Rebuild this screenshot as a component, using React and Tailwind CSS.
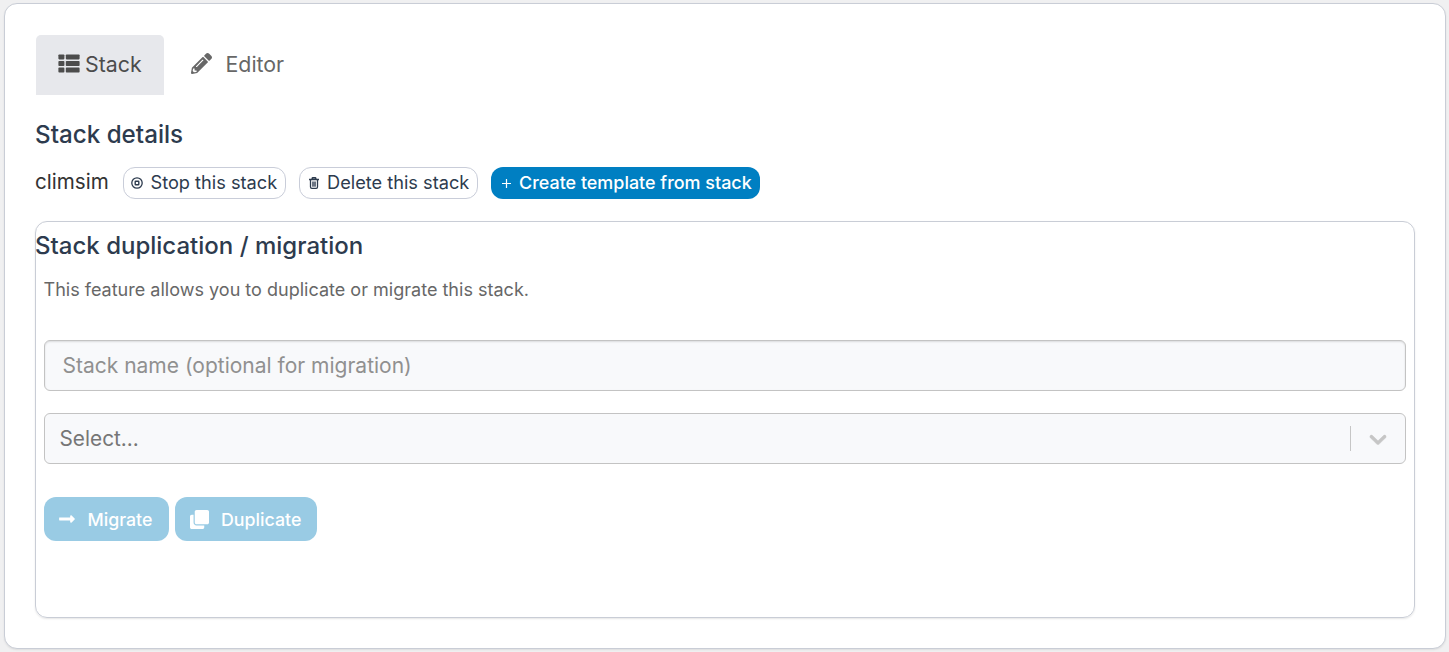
import React from 'react';
import { FaPencilAlt, FaClone, FaLongArrowAltRight } from 'react-icons/fa';

function ListIcon() {
  return (
    <svg className="mr-[5px] mb-[3px] h-[19px] w-[22px] shrink-0" viewBox="0 0 22 19" fill="currentColor">
      <rect x="0.4" y="0.4" width="6" height="5" rx="0.8" />
      <rect x="7.8" y="0.4" width="13.8" height="5" rx="0.8" />
      <rect x="0.4" y="7" width="6" height="5" rx="0.8" />
      <rect x="7.8" y="7" width="13.8" height="5" rx="0.8" />
      <rect x="0.4" y="13.6" width="6" height="5" rx="0.8" />
      <rect x="7.8" y="13.6" width="13.8" height="5" rx="0.8" />
    </svg>
  );
}

function StopIcon() {
  return (
    <svg className="h-3 w-3 shrink-0" viewBox="0 0 12 12" fill="none" stroke="currentColor">
      <circle cx="6" cy="6" r="5.2" strokeWidth="1.3" />
      <rect x="4.2" y="4.2" width="3.6" height="3.6" rx="0.5" strokeWidth="1.4" />
    </svg>
  );
}

function TrashIcon() {
  return (
    <svg className="h-3 w-2.5 shrink-0" viewBox="0 0 10 12" fill="none" stroke="currentColor">
      <path d="M0 2.5h10M3.2 2.3V1.5q0-.8.8-.8h2q.8 0 .8.8v.8" strokeWidth="1.5" />
      <path d="M1.5 3v7q0 1.3 1.3 1.3h4.4q1.3 0 1.3-1.3V3" strokeWidth="1.3" />
      <path d="M3 4.5h4v5.2H3z" fill="currentColor" fillOpacity=".7" stroke="none" />
    </svg>
  );
}

function PlusIcon() {
  return (
    <svg className="h-[9px] w-[9px] shrink-0" viewBox="0 0 9 9" fill="none" stroke="currentColor">
      <path d="M4.5 0v9M0 4.5h9" strokeWidth="1.2" />
    </svg>
  );
}

export default function App() {
  return (
    <div className="flex h-[652px] w-[1449px] bg-[#f0f0f1] pt-[3px] pr-[3px] pb-[3px] pl-1 font-['Inter',sans-serif] whitespace-nowrap">
      <main className="flex flex-1 flex-col rounded-[13px] border border-[#c9cdd6] bg-white px-[30px] pt-[31px] pb-[30px] shadow-[0_1px_2px_rgba(0,0,0,0.08)]">
        <nav className="ml-px flex h-[60px] text-[21.33px] leading-none">
          <a className="flex w-32 items-center rounded-t-[5px] bg-[#e7e8ec] pl-[22px] text-[#4c4c4c]">
            <ListIcon />
            <span>Stack</span>
          </a>
          <a className="flex items-center pl-[27px] text-[#676767]">
            <FaPencilAlt className="mr-[13.5px] mb-[3px] h-[21px] w-[21px]" />
            <span>Editor</span>
          </a>
        </nav>

        <h2 className="mt-6 h-8 text-[24.2px] leading-8 font-medium text-[#2d3b4e]">Stack details</h2>

        <div className="mt-4 flex h-8 text-[18.2px] leading-[30px] text-[#2d3b4e]">
          <span className="w-[88px] text-[20.6px] leading-[29px] text-[#333333]">climsim</span>
          <button className="flex w-[163px] items-center rounded-[12px] border border-[#c9cdd9] pl-[7px]">
            <StopIcon />
            <span className="ml-[7.5px] pb-0.5 leading-7">Stop this stack</span>
          </button>
          <button className="ml-[13px] flex w-[179px] items-center rounded-[12px] border border-[#c9cdd9] pl-[9px]">
            <TrashIcon />
            <span className="ml-2 pb-0.5 leading-7">Delete this stack</span>
          </button>
          <button className="ml-[13px] flex w-[269px] items-center rounded-[12px] bg-[#007fc2] pl-[10.5px] font-medium text-white">
            <PlusIcon />
            <span className="ml-[8.5px] text-[17.95px]">Create template from stack</span>
          </button>
        </div>

        <section className="mt-[22px] flex h-[397px] flex-col rounded-[12px] border border-[#c9cdd6] shadow-[0_1px_2px_rgba(0,0,0,0.1)]">
          <h2 className="mt-2 -ml-px h-8 text-[24.02px] leading-8 font-medium text-[#2d3b4e]">Stack duplication / migration</h2>
          <div className="flex flex-col px-2">
            <p className="mt-3.5 -ml-px h-7 pl-[0.5px] text-[18.05px] leading-7 text-[#676767]">
              This feature allows you to duplicate or migrate this stack.
            </p>
            <input
              placeholder="Stack name (optional for migration)"
              className="mt-9 h-[51px] rounded-[6px] border border-[#c3c3c3] bg-[#f8f9fb] px-[17.5px] pb-px text-[21px] text-[#333333] shadow-[inset_0_1px_2px_rgba(0,0,0,0.12)] placeholder:text-[#909090]"
            />
            <div className="mt-[22px] flex h-[51px] items-center rounded-[6px] border border-[#c3c3c3] bg-[#f8f9fb] pl-[14.5px] text-[20.8px] text-[#767676]">
              <span className="flex-1">Select...</span>
              <span className="h-[25px] w-px bg-[#c6c6c6]" />
              <span className="flex w-[54px] items-center justify-center text-[#c6c6c6]">
                <svg className="mr-px h-7 w-7" viewBox="0 0 20 20" fill="currentColor" stroke="currentColor" strokeWidth="0.3">
                  <path d="M4.516 7.548c0.436-0.446 1.043-0.481 1.576 0l3.908 3.747 3.908-3.747c0.533-0.481 1.141-0.446 1.574 0 0.436 0.445 0.408 1.197 0 1.615-0.406 0.418-4.695 4.502-4.695 4.502-0.217 0.223-0.502 0.335-0.787 0.335s-0.57-0.112-0.789-0.335c0 0-4.287-4.084-4.695-4.502s-0.436-1.17 0-1.615z" />
                </svg>
              </span>
            </div>
            <div className="mt-[33px] flex h-11 gap-1.5 text-[17.8px] font-medium text-white">
              <button className="flex w-[125px] items-center rounded-[12px] bg-[#99cbe4] pl-[15px]">
                <FaLongArrowAltRight className="h-[18px] w-4" />
                <span className="mt-0.5 ml-[12.5px]">Migrate</span>
              </button>
              <button className="flex w-[142px] items-center rounded-[12px] bg-[#99cbe4] pl-[15px]">
                <FaClone className="h-[19px] w-[19px]" />
                <span className="mt-0.5 ml-3">Duplicate</span>
              </button>
            </div>
          </div>
        </section>
      </main>
    </div>
  );
}
